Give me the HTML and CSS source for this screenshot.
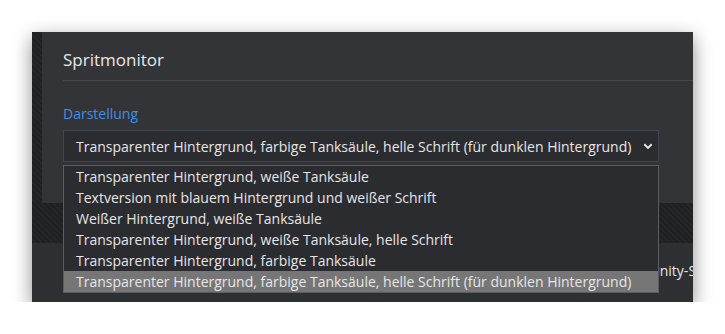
FILE: index.html
```html
<!DOCTYPE html>
<html>
<head>
    <meta charset="utf-8">
    <meta name="viewport" content="width=device-width,initial-scale=1">
    <title>Spritmonitor</title>
    <link rel="stylesheet" href="styles.css">
</head>
<body>
    <div class="shot">
        <div class="page">
            <div class="page-top"></div>
            <div class="page-foot"><span>Community-Statistik</span></div>
        </div>
        <div class="modal">
            <div class="modal-head">Spritmonitor</div>
            <div class="modal-body">
                <label class="field-label">Darstellung</label>
                <div class="select">
                    <span>Transparenter Hintergrund, farbige Tanksäule, helle Schrift (für dunklen Hintergrund)</span>
                    <svg class="chev" width="10" height="7" viewBox="0 0 10 7"><path d="M1.3 1.3 5 4.9 8.7 1.3" fill="none" stroke="#e6e6e6" stroke-width="1.9"/></svg>
                </div>
            </div>
        </div>
        <ul class="options">
            <li>Transparenter Hintergrund, weiße Tanksäule</li>
            <li>Textversion mit blauem Hintergrund und weißer Schrift</li>
            <li>Weißer Hintergrund, weiße Tanksäule</li>
            <li>Transparenter Hintergrund, weiße Tanksäule, helle Schrift</li>
            <li>Transparenter Hintergrund, farbige Tanksäule</li>
            <li class="on">Transparenter Hintergrund, farbige Tanksäule, helle Schrift (für dunklen Hintergrund)</li>
        </ul>
    </div>
</body>
</html>
```
FILE: styles.css
```css
*{margin:0;padding:0;box-sizing:border-box;list-style:none;}
body{background:#fff;font-family:"Open Sans","Noto Sans",sans-serif;font-size:14px;color:#e6e6e6;}
.shot{
    position:relative;
    margin:32px 0 0 32px;
    width:661px;
    height:270px;
    overflow:hidden;
    box-shadow:0 6px 18px rgba(0,0,0,0.45);
}
.page{display:flex;flex-direction:column;height:100%;}
.page-top{
    height:211px;
    background:repeating-linear-gradient(45deg,#1f2023 0 2px,#242528 2px 4px);
}
.page-foot{
    flex:1;
    background:#2e2f33;
    padding:18px 0 0 576px;
    white-space:nowrap;
}
.modal{
    position:absolute;
    top:0;
    left:10px;
    right:0;
    height:171px;
    background:#333438;
    padding:0 0 0 21px;
}
.modal-head{
    height:49px;
    border-bottom:1px solid #46474b;
    font-size:17px;
    line-height:20px;
    padding-top:18px;
    color:#e8e8e8;
}
.modal-body{padding-top:24px;}
.field-label{display:block;color:#3f8fe6;font-size:14px;line-height:18px;margin-bottom:7px;}
.select{
    width:596px;
    height:32px;
    display:flex;
    align-items:center;
    justify-content:space-between;
    padding:0 5px 0 12px;
    background:#2b2c30;
    border:1px solid #3c4954;
    white-space:nowrap;
}
.chev{flex:none;}
.options{
    position:absolute;
    left:31px;
    top:133px;
    width:596px;
    border:1px solid #5c5d60;
    background:#2b2c30;
}
.options li{height:21px;line-height:20px;padding:1px 0 0 12px;white-space:nowrap;}
.options li.on{background:#767676;}
```
